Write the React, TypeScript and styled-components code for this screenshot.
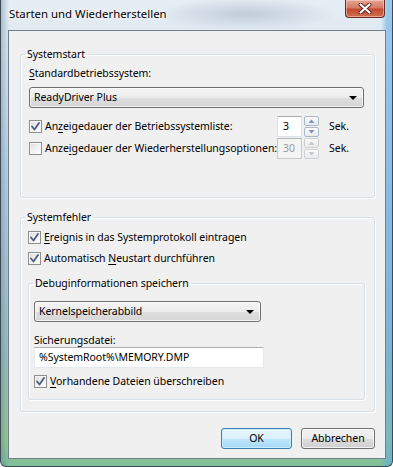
import React from 'react';
import styled, { createGlobalStyle } from 'styled-components';

const GlobalStyle = createGlobalStyle`
  html, body {
    margin: 0;
    padding: 0;
  }
  body {
    width: 393px;
    height: 467px;
    overflow: hidden;
    font-family: "Noto Sans", "Open Sans", sans-serif;
    font-size: 10.5px;
    letter-spacing: -0.05px;
    color: #000;
  }
`;

const Window = styled.div`
  width: 393px;
  height: 467px;
  box-sizing: border-box;
  display: flex;
  flex-direction: column;
  padding: 0 6px 7px 7px;
  border: 1px solid #3d4a55;
  border-top: none;
  border-radius: 0 0 6px 6px;
  background:
    radial-gradient(ellipse 90px 16px at 245px 14px, rgba(150, 165, 185, 0.45), transparent),
    linear-gradient(to right, rgba(70, 110, 140, 0.35) 0, transparent 8px, transparent 380px, rgba(90, 170, 230, 0.55) 386px),
    linear-gradient(to bottom, #e6eef5 0, #dfe8f0 40px, #b9cfe0 200px, #9fc0bc 360px, #9ccb8e 440px, #7dbf9c 467px);
`;

const TitleBar = styled.div`
  height: 30px;
  display: flex;
  align-items: flex-start;
  justify-content: space-between;
`;

const Title = styled.div`
  padding-top: 6px;
  padding-left: 1px;
  font-size: 11.4px;
  letter-spacing: 0;
  line-height: 15px;
  color: #000;
  text-shadow: 0 0 6px #fff, 0 0 3px #fff;
`;

const CloseButton = styled.div`
  width: 40px;
  height: 18px;
  box-sizing: border-box;
  margin-right: 1px;
  border: 1px solid #6b2a22;
  border-top: none;
  border-radius: 0 0 4px 4px;
  background: linear-gradient(to bottom, #e5a596 0, #d77a66 45%, #c24a30 55%, #d0704e 100%);
  box-shadow: inset 0 0 0 1px rgba(255, 220, 210, 0.5);
  display: flex;
  align-items: center;
  justify-content: center;
`;

const Client = styled.div`
  flex: 1;
  border: 1px solid #6f7f8c;
  background: #f0f0f0;
  display: flex;
  flex-direction: column;
  padding: 16px 10px 0 11px;
`;

const Group = styled.fieldset<{ $padL: number; $padR: number; $padB: number; $top: number }>`
  margin: ${(p) => p.$top}px 0 0 0;
  padding: 0 ${(p) => p.$padR}px ${(p) => p.$padB}px ${(p) => p.$padL}px;
  border: 1px solid #d5dfe5;
  border-radius: 3px;
  box-shadow: 1px 1px 0 #fff, inset 1px 1px 0 #fff;
  min-width: 0;
`;

const Legend = styled.legend<{ $shift: number }>`
  padding: 0 2px;
  margin-left: ${(p) => p.$shift}px;
  line-height: 15px;
`;

const Label = styled.div<{ $top: number; $lh?: number }>`
  margin-top: ${(p) => p.$top}px;
  line-height: ${(p) => p.$lh ?? 15}px;
`;

const Combo = styled.div<{ $top: number; $width?: number }>`
  margin-top: ${(p) => p.$top}px;
  height: 21px;
  width: ${(p) => (p.$width ? `${p.$width}px` : 'auto')};
  box-sizing: border-box;
  border: 1px solid #707070;
  border-radius: 3px;
  background: linear-gradient(to bottom, #f4f4f4 0, #ececec 50%, #dedede 51%, #d6d6d6 100%);
  box-shadow: inset 0 0 0 1px rgba(255, 255, 255, 0.7);
  display: flex;
  align-items: center;
  justify-content: space-between;
  padding: 0 6px 0 4px;
  line-height: 15px;
`;

const Arrow = styled.span`
  width: 0;
  height: 0;
  border-left: 4px solid transparent;
  border-right: 4px solid transparent;
  border-top: 4px solid #000;
`;

const CheckRow = styled.div<{ $top: number; $h?: number }>`
  margin-top: ${(p) => p.$top}px;
  height: ${(p) => p.$h ?? 15}px;
  display: flex;
  align-items: center;
`;

const CheckLabel = styled.label`
  flex: 1;
  display: flex;
  align-items: center;
  gap: 3px;
  line-height: 15px;
  white-space: nowrap;
`;

const Box = styled.span`
  width: 13px;
  height: 13px;
  box-sizing: border-box;
  border: 1px solid #8f8f8f;
  background: linear-gradient(135deg, #dcdcdc 0, #f4f4f4 60%, #ffffff 100%);
  box-shadow: inset 0 0 0 1px #f6f6f6;
  display: flex;
  align-items: center;
  justify-content: center;
  flex: none;
`;

const Spin = styled.div`
  width: 43px;
  height: 21px;
  display: flex;
  gap: 2px;
`;

const SpinInput = styled.div<{ $disabled?: boolean }>`
  width: 25px;
  box-sizing: border-box;
  border: 1px solid ${(p) => (p.$disabled ? '#c9c9c9' : '#dde3ea')};
  border-top-color: ${(p) => (p.$disabled ? '#b5b5b5' : '#abadb3')};
  background: ${(p) => (p.$disabled ? '#f4f4f4' : '#fff')};
  color: ${(p) => (p.$disabled ? '#9a9a9a' : '#000')};
  padding: 2px 0 0 5px;
  line-height: 15px;
`;

const SpinButtons = styled.div`
  width: 15px;
  display: flex;
  flex-direction: column;
  gap: 1px;
`;

const SpinBtn = styled.div<{ $disabled?: boolean }>`
  flex: 1;
  box-sizing: border-box;
  border: 1px solid ${(p) => (p.$disabled ? '#d0d0d0' : '#a9b9c9')};
  border-radius: 2px;
  background: linear-gradient(to bottom, #fbfbfb, #e8eaec);
  display: flex;
  align-items: center;
  justify-content: center;
`;

const Unit = styled.span`
  width: 35px;
  margin-left: 9px;
  line-height: 15px;
`;

const TextInput = styled.div<{ $width: number }>`
  width: ${(p) => p.$width}px;
  height: 21px;
  box-sizing: border-box;
  border: 1px solid #e3e9ef;
  border-top-color: #abadb3;
  background: #fff;
  padding: 2px 0 0 4px;
  line-height: 15px;
`;

const ButtonRow = styled.div`
  margin-top: 16px;
  display: flex;
  justify-content: flex-end;
  gap: 9px;
`;

const Button = styled.button<{ $default?: boolean; $width: number }>`
  width: ${(p) => p.$width}px;
  height: 21px;
  padding: 0;
  font: inherit;
  letter-spacing: inherit;
  line-height: 15px;
  color: #000;
  border: 1px solid ${(p) => (p.$default ? '#3c7fb1' : '#707070')};
  border-radius: 3px;
  background: ${(p) =>
    p.$default
      ? 'linear-gradient(to bottom, #eaf6fd 0, #d9f0fc 50%, #bee6fd 51%, #a7d9f5 100%)'
      : 'linear-gradient(to bottom, #f2f2f2 0, #ebebeb 50%, #dddddd 51%, #cfcfcf 100%)'};
  box-shadow: inset 0 0 0 1px ${(p) => (p.$default ? 'rgba(200, 240, 255, 0.9)' : 'rgba(255, 255, 255, 0.7)')};
`;

const U = styled.span`
  text-decoration: underline;
  text-underline-offset: 2px;
`;

const CheckMark = () => (
  <svg width="9" height="9" viewBox="0 0 9 9">
    <path d="M1 4.5 L3.5 7.5 L8 1" fill="none" stroke="#4a5b80" strokeWidth="1.8" strokeLinecap="round" strokeLinejoin="round" />
  </svg>
);

const Check = ({ checked }: { checked?: boolean }) => <Box>{checked && <CheckMark />}</Box>;

const Tri = ({ up, disabled }: { up?: boolean; disabled?: boolean }) => (
  <svg width="7" height="4" viewBox="0 0 7 4">
    <path d={up ? 'M0.5 4 L3.5 0.5 L6.5 4 Z' : 'M0.5 0 L3.5 3.5 L6.5 0 Z'} fill={disabled ? '#c4c8cc' : '#7b96b5'} />
  </svg>
);

const SpinBox = ({ value, disabled }: { value: string; disabled?: boolean }) => (
  <Spin>
    <SpinInput $disabled={disabled}>{value}</SpinInput>
    <SpinButtons>
      <SpinBtn $disabled={disabled}>
        <Tri up disabled={disabled} />
      </SpinBtn>
      <SpinBtn $disabled={disabled}>
        <Tri disabled={disabled} />
      </SpinBtn>
    </SpinButtons>
  </Spin>
);

const App = () => {
  return (
    <>
      <GlobalStyle />
      <Window>
        <TitleBar>
          <Title>Starten und Wiederherstellen</Title>
          <CloseButton>
            <svg width="14" height="11" viewBox="0 0 14 11">
              <path d="M2.5 1.5 L11.5 9.5 M11.5 1.5 L2.5 9.5" stroke="#5a2018" strokeWidth="4" strokeLinecap="round" />
              <path d="M2.5 1.5 L11.5 9.5 M11.5 1.5 L2.5 9.5" stroke="#fff" strokeWidth="2.2" strokeLinecap="round" />
            </svg>
          </CloseButton>
        </TitleBar>
        <Client>
          <Group $top={0} $padL={8} $padR={10} $padB={38}>
            <Legend $shift={-4}>Systemstart</Legend>
            <Label $top={4}>
              <U>S</U>tandardbetriebssystem:
            </Label>
            <Combo $top={6}>
              <span>ReadyDriver Plus</span>
              <Arrow />
            </Combo>
            <CheckRow $top={8} $h={21}>
              <CheckLabel>
                <Check checked />
                <span>
                  An<U>z</U>eigedauer der Betriebssystemliste:
                </span>
              </CheckLabel>
              <SpinBox value="3" />
              <Unit>Sek.</Unit>
            </CheckRow>
            <CheckRow $top={1} $h={21}>
              <CheckLabel>
                <Check />
                <span>
                  Anze<U>i</U>gedauer der Wiederherstellungsoptionen:
                </span>
              </CheckLabel>
              <SpinBox value="30" disabled />
              <Unit>Sek.</Unit>
            </CheckRow>
          </Group>

          <Group $top={12} $padL={7} $padR={9} $padB={11}>
            <Legend $shift={-3}>Systemfehler</Legend>
            <CheckRow $top={5}>
              <CheckLabel>
                <Check checked />
                <span>
                  <U>E</U>reignis in das Systemprotokoll eintragen
                </span>
              </CheckLabel>
            </CheckRow>
            <CheckRow $top={6}>
              <CheckLabel>
                <Check checked />
                <span>
                  Automatisch <U>N</U>eustart durchführen
                </span>
              </CheckLabel>
            </CheckRow>
            <Group $top={10} $padL={5} $padR={10} $padB={10}>
              <Legend $shift={-1}>Debuginformationen speichern</Legend>
              <Combo $top={10} $width={227}>
                <span>Kernelspeicherabbild</span>
                <Arrow />
              </Combo>
              <Label $top={12} $lh={13}>
                Sicherungsdatei:
              </Label>
              <TextInput $width={230}>%SystemRoot%\MEMORY.DMP</TextInput>
              <CheckRow $top={6}>
                <CheckLabel>
                  <Check checked />
                  <span>
                    <U>V</U>orhandene Dateien überschreiben
                  </span>
                </CheckLabel>
              </CheckRow>
            </Group>
          </Group>

          <ButtonRow>
            <Button $default $width={71}>
              OK
            </Button>
            <Button $width={74}>Abbrechen</Button>
          </ButtonRow>
        </Client>
      </Window>
    </>
  );
};

export default App;
